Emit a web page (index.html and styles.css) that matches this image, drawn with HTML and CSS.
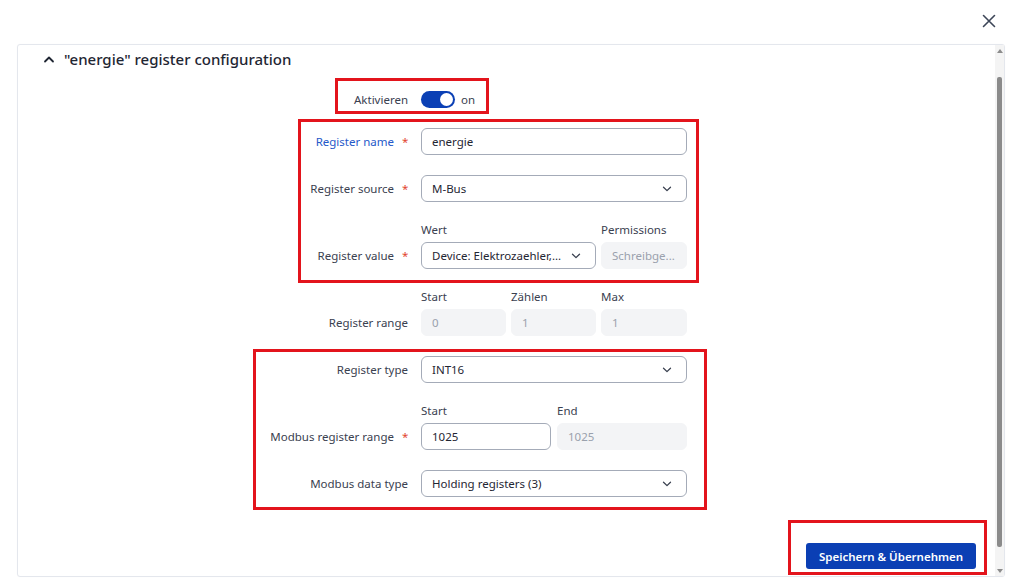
FILE: index.html
```html
<!DOCTYPE html>
<html lang="de">
<head>
<meta charset="utf-8">
<title>Register configuration</title>
<link rel="stylesheet" href="styles.css">
</head>
<body>
<div class="dialog">
  <div class="topbar">
    <button class="close" aria-label="Schließen">
      <svg width="14" height="14" viewBox="0 0 14 14"><path d="M1.5 1.5L12.5 12.5M12.5 1.5L1.5 12.5" stroke="#3d4658" stroke-width="1.6" fill="none" stroke-linecap="round"/></svg>
    </button>
  </div>
  <div class="panel">
    <div class="content">
      <div class="title">
        <svg class="chev-up" width="12" height="8" viewBox="0 0 12 8"><path d="M2 6.5L6 2.5L10 6.5" stroke="#1f2633" stroke-width="1.8" fill="none" stroke-linecap="round" stroke-linejoin="round"/></svg>
        <span>"energie" register configuration</span>
      </div>
      <div class="form">
        <div class="row row-toggle">
          <div class="label">Aktivieren</div>
          <div class="field toggle-field">
            <span class="toggle"><span class="knob"></span></span>
            <span class="toggle-text">on</span>
          </div>
        </div>
        <div class="row">
          <div class="label label-active">Register name<span class="req">*</span></div>
          <div class="field"><div class="input">energie</div></div>
        </div>
        <div class="row">
          <div class="label">Register source<span class="req">*</span></div>
          <div class="field"><div class="input select">M-Bus<svg class="chev" width="10" height="6" viewBox="0 0 10 6"><path d="M1.5 1.2L5 4.6L8.5 1.2" stroke="#3a4150" stroke-width="1.3" fill="none" stroke-linecap="round" stroke-linejoin="round"/></svg></div></div>
        </div>
        <div class="row">
          <div class="label">Register value<span class="req">*</span></div>
          <div class="field cols cols-value">
            <div class="sub">
              <div class="sublabel">Wert</div>
              <div class="input select"><span class="ellip">Device: Elektrozaehler,...</span><svg class="chev" width="10" height="6" viewBox="0 0 10 6"><path d="M1.5 1.2L5 4.6L8.5 1.2" stroke="#3a4150" stroke-width="1.3" fill="none" stroke-linecap="round" stroke-linejoin="round"/></svg></div>
            </div>
            <div class="sub">
              <div class="sublabel">Permissions</div>
              <div class="input disabled">Schreibge...</div>
            </div>
          </div>
        </div>
        <div class="row">
          <div class="label">Register range</div>
          <div class="field cols cols-three">
            <div class="sub"><div class="sublabel">Start</div><div class="input disabled">0</div></div>
            <div class="sub"><div class="sublabel">Zählen</div><div class="input disabled">1</div></div>
            <div class="sub"><div class="sublabel">Max</div><div class="input disabled">1</div></div>
          </div>
        </div>
        <div class="row">
          <div class="label">Register type</div>
          <div class="field"><div class="input select">INT16<svg class="chev" width="10" height="6" viewBox="0 0 10 6"><path d="M1.5 1.2L5 4.6L8.5 1.2" stroke="#3a4150" stroke-width="1.3" fill="none" stroke-linecap="round" stroke-linejoin="round"/></svg></div></div>
        </div>
        <div class="row">
          <div class="label">Modbus register range<span class="req">*</span></div>
          <div class="field cols cols-two">
            <div class="sub"><div class="sublabel">Start</div><div class="input">1025</div></div>
            <div class="sub"><div class="sublabel">End</div><div class="input disabled">1025</div></div>
          </div>
        </div>
        <div class="row">
          <div class="label">Modbus data type</div>
          <div class="field"><div class="input select">Holding registers (3)<svg class="chev" width="10" height="6" viewBox="0 0 10 6"><path d="M1.5 1.2L5 4.6L8.5 1.2" stroke="#3a4150" stroke-width="1.3" fill="none" stroke-linecap="round" stroke-linejoin="round"/></svg></div></div>
        </div>
      </div>
      <div class="footer">
        <button class="btn-primary">Speichern &amp; Übernehmen</button>
      </div>
    </div>
    <div class="scrollbar">
      <span class="arrow arrow-up"></span>
      <span class="thumb"></span>
      <span class="arrow arrow-down"></span>
    </div>
  </div>
  <div class="mark mark-1"></div>
  <div class="mark mark-2"></div>
  <div class="mark mark-3"></div>
  <div class="mark mark-4"></div>
</div>
</body>
</html>
```
FILE: styles.css
```css
* { box-sizing: border-box; }
html, body { margin: 0; padding: 0; background: #ffffff; }
body {
  font-family: "Noto Sans", "Open Sans", "Liberation Sans", sans-serif;
  font-size: 11.5px;
  color: #3a4150;
  width: 1015px;
  height: 586px;
  overflow: hidden;
}
.dialog { position: relative; width: 1015px; height: 586px; }
.topbar {
  height: 44px;
  display: flex;
  justify-content: flex-end;
  align-items: flex-start;
  padding: 14px 19px 0 0;
}
.close {
  border: 0; background: transparent; padding: 0; margin: 0;
  width: 14px; height: 14px; display: block; cursor: pointer;
}
.close svg { display: block; }
.panel {
  margin: 0 10px 0 17px;
  height: 533px;
  border: 1px solid #e4e7ed;
  border-radius: 3px;
  display: flex;
  box-shadow: 0 0 1px rgba(20, 30, 60, 0.06);
}
.content {
  flex: 1;
  display: flex;
  flex-direction: column;
}
.title {
  display: flex;
  align-items: center;
  gap: 9px;
  padding: 0 0 0 25px;
  height: 27px;
  font-size: 15px;
  font-weight: 500;
  color: #1f2633;
}
.chev-up { display: block; }
.form {
  margin: 19px 0 0 230px;
  display: flex;
  flex-direction: column;
  gap: 20px;
}
.row {
  display: grid;
  grid-template-columns: 160px 266px;
  column-gap: 13px;
}
.label {
  align-self: end;
  height: 27px;
  display: flex;
  align-items: center;
  justify-content: flex-end;
  white-space: nowrap;
  color: #3a4150;
}
.label-active { color: #2559c9; }
.req { color: #e2452f; margin-left: 8px; width: 6px; }
.row-toggle .label { height: 17px; }
.toggle-field { display: flex; align-items: center; gap: 6px; height: 17px; }
.toggle {
  width: 34px; height: 17px; border-radius: 9px;
  background: #0b40b5; display: flex; align-items: center; justify-content: flex-end;
  padding: 0 2px;
}
.knob { width: 13px; height: 13px; border-radius: 50%; background: #ffffff; }
.toggle-text { color: #3a4150; }
.input {
  height: 27px;
  border: 1px solid #a4abb8;
  border-radius: 6px;
  display: flex;
  align-items: center;
  padding: 0 10px;
  color: #1f2633;
  white-space: nowrap;
  overflow: hidden;
}
.select { justify-content: space-between; }
.select .chev { flex: none; margin-right: 4px; }
.ellip { overflow: hidden; text-overflow: ellipsis; }
.disabled {
  background: #f3f4f6;
  border-color: #f3f4f6;
  color: #9aa1ad;
}
.cols { display: grid; }
.cols-value { grid-template-columns: 175px 86px; column-gap: 5px; }
.cols-three { grid-template-columns: 85px 85px 86px; column-gap: 5px; }
.cols-two { grid-template-columns: 130px 130px; column-gap: 6px; }
.sublabel { height: 16px; line-height: 16px; margin-bottom: 4px; color: #3a4150; white-space: nowrap; }
.footer {
  margin-top: auto;
  display: flex;
  justify-content: flex-end;
  padding: 0 19px 7px 0;
}
.btn-primary {
  width: 170px; height: 26px;
  background: #0b3fb4;
  color: #ffffff;
  border: 0;
  border-radius: 3px;
  font-family: inherit;
  font-size: 11.5px;
  font-weight: 600;
  padding: 0;
}
.scrollbar {
  width: 9px;
  background: #f4f4f4;
  display: flex;
  flex-direction: column;
  align-items: center;
  padding: 4px 0 3px;
}
.arrow { width: 0; height: 0; border-left: 3px solid transparent; border-right: 3px solid transparent; }
.arrow-up { border-bottom: 4px solid #8c8c8c; }
.arrow-down { border-top: 4px solid #8c8c8c; }
.thumb {
  width: 5px;
  margin: 24px 0 22px;
  flex: 1;
  background: #8b8b8b;
  border-radius: 2px;
}
.mark {
  position: absolute;
  border: 3px solid #e3141c;
  pointer-events: none;
}
.mark-1 { left: 335px; top: 78px; width: 154px; height: 36px; }
.mark-2 { left: 298px; top: 119px; width: 401px; height: 164px; }
.mark-3 { left: 253px; top: 349px; width: 454px; height: 161px; }
.mark-4 { left: 788px; top: 520px; width: 199px; height: 55px; }
```
